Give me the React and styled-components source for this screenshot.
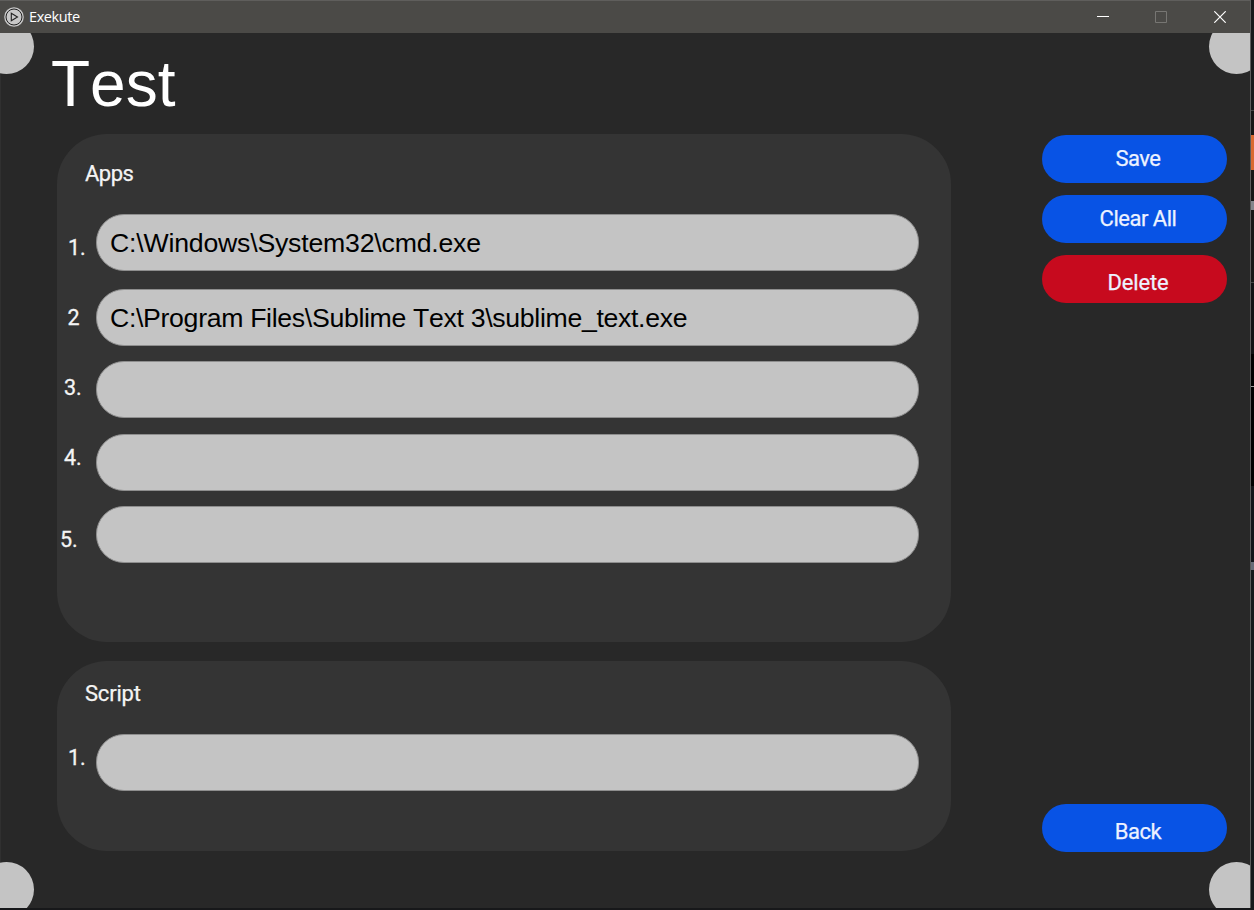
import React from "react";
import styled, { createGlobalStyle } from "styled-components";

const GlobalStyle = createGlobalStyle`
  html, body { margin: 0; padding: 0; background: #151618; overflow: hidden; }
  * { box-sizing: border-box; }
`;

const Desktop = styled.div`
  display: flex;
  width: 1254px;
  height: 910px;
  overflow: hidden;
  background: #17181a;
`;

const Window = styled.div`
  display: flex;
  flex-direction: column;
  width: 1251px;
  height: 908px;
  border-right: 1px solid #5c5c5c;
  background: #282828;
`;

const TitleBar = styled.header`
  display: flex;
  align-items: center;
  height: 33px;
  padding-left: 4px;
  border-top: 1px solid #5f5e5c;
  background: #4b4a47;
`;

const AppIcon = styled.svg`
  width: 20px;
  height: 20px;
  margin-right: 5px;
`;

const AppName = styled.span`
  flex: 1;
  color: #fff;
  font: 400 14.5px/20px "Open Sans", sans-serif;
  letter-spacing: -0.4px;
`;

const WindowButton = styled.button`
  display: flex;
  align-items: center;
  justify-content: center;
  width: 58.5px;
  height: 32px;
  padding: 0;
  border: 0;
  background: none;
  svg { display: block; }
`;

const ControlGroup = styled.div`
  display: flex;
  padding-right: 1.25px;
`;

const Client = styled.main`
  position: relative;
  flex: 1;
  display: flex;
  flex-direction: column;
  overflow: hidden;
  box-shadow: inset 1px 0 #303030;
`;

const CornerDot = styled.span`
  position: absolute;
  width: 55px;
  height: 55px;
  border-radius: 50%;
  background: #c4c4c4;
  ${(p) => (p.$right ? "right: -13.5px;" : "left: -21px;")}
  ${(p) => (p.$bottom ? "bottom: -9px;" : "top: -14px;")}
`;

const Title = styled.h1`
  margin: 0;
  height: 101px;
  padding: 14px 0 0 51px;
  color: #fff;
  font: 400 64px/74px "Liberation Sans", Arial, sans-serif;
  font-kerning: none;
`;

const Columns = styled.div`
  display: flex;
  height: 718px;
  padding: 0 23px 0 57px;
  justify-content: space-between;
`;

const Panels = styled.div`
  display: flex;
  flex-direction: column;
  gap: 19px;
  width: 894px;
`;

const Panel = styled.section`
  height: ${(p) => p.$height}px;
  padding-top: ${(p) => p.$top}px;
  border-radius: 50px;
  background: #343434;
`;

const PanelTitle = styled.h2`
  margin: 0 0 ${(p) => p.$gap}px 28px;
  color: #f4f4f4;
  font: 400 22px/24px Roboto, sans-serif;
  -webkit-text-stroke: 0.25px #f4f4f4;
  letter-spacing: ${(p) => p.$track}px;
`;

const Rows = styled.div`
  display: flex;
  flex-direction: column;
`;

const Row = styled.label`
  display: flex;
  align-items: flex-start;
  height: 57px;
  margin-bottom: ${(p) => p.$after || 0}px;
`;

const RowNumber = styled.span`
  width: 39px;
  padding-left: ${(p) => p.$indent}px;
  margin-top: ${(p) => p.$drop}px;
  color: #f4f4f4;
  font: 400 21.5px/24px Roboto, sans-serif;
  -webkit-text-stroke: 0.3px #f4f4f4;
  letter-spacing: -0.2px;
  white-space: nowrap;
`;

const Field = styled.span`
  width: 823px;
  height: 57px;
  padding: 0 13px;
  border: 1px solid #8e8e8e;
  border-radius: 28px;
  background: #c4c4c4;
  color: #000;
  font: 400 26.67px/56px "Liberation Sans", Arial, sans-serif;
  letter-spacing: ${(p) => p.$track || 0}px;
  font-kerning: none;
  white-space: pre;
`;

const Actions = styled.nav`
  display: flex;
  flex-direction: column;
  gap: 12px;
  width: 185px;
  padding-top: 1px;
`;

const ActionButton = styled.button`
  display: block;
  height: 48px;
  padding: ${(p) => p.$drop || 0}px 0 0 7px;
  margin-top: ${(p) => (p.$last ? "auto" : 0)};
  border: 0;
  border-radius: 24px;
  background: ${(p) => (p.$danger ? "#c70a1e" : "#0853e5")};
  color: #edf2ff;
  font: 400 22px/24px Roboto, sans-serif;
  -webkit-text-stroke: 0.25px #edf2ff;
  letter-spacing: ${(p) => p.$track || 0}px;
`;

const Behind = styled.aside`
  display: flex;
  flex-direction: column;
  width: 3px;
`;

const Strip = styled.span`
  flex: none;
  height: ${(p) => p.$h}px;
  background: ${(p) => p.$c};
`;

const apps = [
  { n: "1.", indent: 11, drop: 22, value: "C:\\Windows\\System32\\cmd.exe", track: -0.2, after: 18 },
  { n: "2", indent: 10.5, drop: 17, value: "C:\\Program Files\\Sublime Text 3\\sublime_text.exe", track: -0.32, after: 15 },
  { n: "3.", indent: 7, drop: 15, value: "", after: 16 },
  { n: "4.", indent: 7, drop: 12, value: "", after: 15 },
  { n: "5.", indent: 3, drop: 22, value: "" },
];

const strips = [
  [110, "#16181a"], [1, "#444"], [24, "#161616"], [35, "#d9692f"],
  [31, "#161616"], [9, "#85868c"], [72, "#161616"], [1, "#444"],
  [71, "#111214"], [32, "#000"], [1, "#a0a0a0"], [99, "#000"],
  [76, "#131519"], [8, "#696d78"], [340, "#17191c"],
];

function PathRow({ n, indent, drop, value, track, after }) {
  return (
    <Row $after={after}>
      <RowNumber $indent={indent} $drop={drop}>{n}</RowNumber>
      <Field $track={track}>{value}</Field>
    </Row>
  );
}

export default function App() {
  return (
    <>
      <GlobalStyle />
      <Desktop>
        <Window>
          <TitleBar>
            <AppIcon viewBox="0 0 20 20" fill="none">
              <circle cx="10" cy="10" r="9.8" fill="#c8c8c8" />
              <circle cx="10" cy="10" r="8" stroke="#222" strokeWidth="1" />
              <path d="M7.3 6.2v7.6l6.2-3.8z" stroke="#222" strokeWidth="1.1" />
            </AppIcon>
            <AppName>Exekute</AppName>
            <ControlGroup>
              <WindowButton aria-label="Minimize">
                <svg width="12" height="12"><path d="M0 5.5h12" stroke="#fff" /></svg>
              </WindowButton>
              <WindowButton aria-label="Maximize">
                <svg width="12" height="12"><path d="M.5.5h11v11H.5z" fill="none" stroke="#777673" /></svg>
              </WindowButton>
              <WindowButton aria-label="Close">
                <svg width="12" height="12"><path d="M.3.3l11.4 11.4M11.7.3L.3 11.7" stroke="#fff" strokeWidth="1.2" /></svg>
              </WindowButton>
            </ControlGroup>
          </TitleBar>
          <Client>
            <CornerDot />
            <CornerDot $right />
            <CornerDot $bottom />
            <CornerDot $right $bottom />
            <Title>Test</Title>
            <Columns>
              <Panels>
                <Panel $height={508} $top={28}>
                  <PanelTitle $gap={28} $track={-0.5}>Apps</PanelTitle>
                  <Rows>
                    {apps.map((a) => <PathRow key={a.n} {...a} />)}
                  </Rows>
                </Panel>
                <Panel $height={190} $top={21}>
                  <PanelTitle $gap={28} $track={-0.2}>Script</PanelTitle>
                  <PathRow n="1." indent={11} drop={12} value="" />
                </Panel>
              </Panels>
              <Actions>
                <ActionButton $track={-0.5}>Save</ActionButton>
                <ActionButton $track={-0.5}>Clear All</ActionButton>
                <ActionButton $danger $drop={8} $track={-0.2}>Delete</ActionButton>
                <ActionButton $last $drop={8} $track={-0.5}>Back</ActionButton>
              </Actions>
            </Columns>
          </Client>
        </Window>
        <Behind>
          {strips.map(([h, c], i) => <Strip key={i} $h={h} $c={c} />)}
        </Behind>
      </Desktop>
    </>
  );
}
